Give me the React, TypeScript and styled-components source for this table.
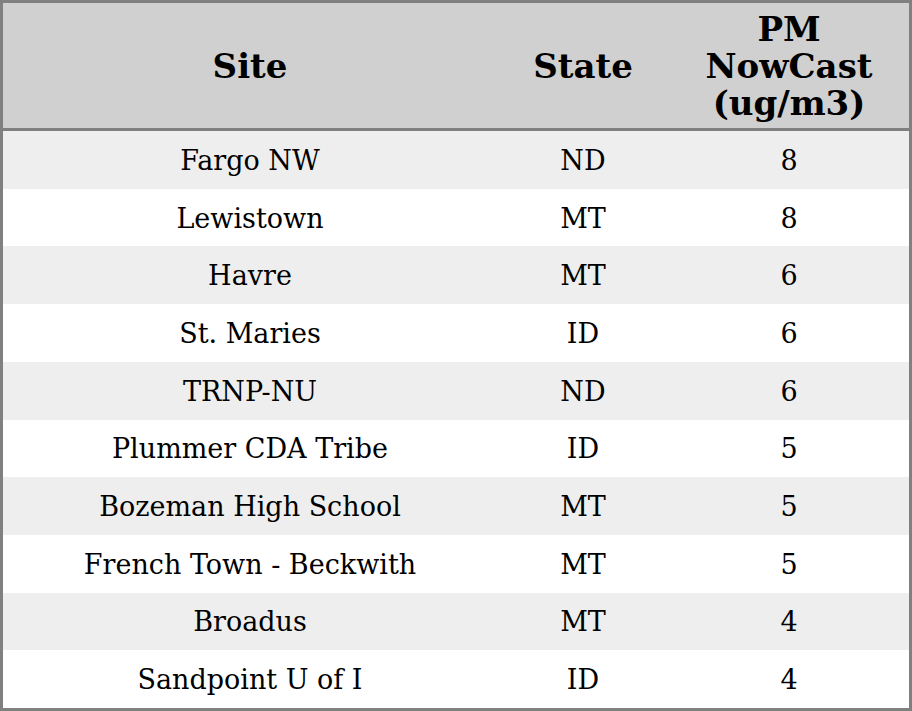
import React from "react";
import styled, { createGlobalStyle } from "styled-components";

const Global = createGlobalStyle`
  html, body { margin: 0; padding: 0; background: #ffffff; }
  * { box-sizing: border-box; }
`;

const Table = styled.div`
  width: 912px;
  height: 711px;
  border: 3px solid #808080;
  display: flex;
  flex-direction: column;
  font-family: "DejaVu Serif", serif;
  color: #000000;
`;

const Cols = `
  display: grid;
  grid-template-columns: 494px 172px 1fr;
  align-items: center;
  text-align: center;
`;

const HeaderRow = styled.div`
  ${Cols}
  height: 128px;
  flex: 0 0 128px;
  background: #d0d0d0;
  border-bottom: 3px solid #808080;
`;

const HeadCell = styled.div`
  font-weight: bold;
  font-size: 34px;
  line-height: 37px;
  padding-top: 2px;
`;

const Row = styled.div<{ $alt: boolean }>`
  ${Cols}
  flex: 1 1 0;
  background: ${(p) => (p.$alt ? "#eeeeee" : "#ffffff")};
`;

const Cell = styled.div`
  font-size: 27px;
  line-height: 30px;
  padding-top: 2px;
`;

const rows: [string, string, string][] = [
  ["Fargo NW", "ND", "8"],
  ["Lewistown", "MT", "8"],
  ["Havre", "MT", "6"],
  ["St. Maries", "ID", "6"],
  ["TRNP-NU", "ND", "6"],
  ["Plummer CDA Tribe", "ID", "5"],
  ["Bozeman High School", "MT", "5"],
  ["French Town - Beckwith", "MT", "5"],
  ["Broadus", "MT", "4"],
  ["Sandpoint U of I", "ID", "4"],
];

export default function App() {
  return (
    <>
      <Global />
      <Table>
        <HeaderRow>
          <HeadCell>Site</HeadCell>
          <HeadCell>State</HeadCell>
          <HeadCell>
            PM
            <br />
            NowCast
            <br />
            (ug/m3)
          </HeadCell>
        </HeaderRow>
        {rows.map((r, i) => (
          <Row key={i} $alt={i % 2 === 0}>
            <Cell>{r[0]}</Cell>
            <Cell>{r[1]}</Cell>
            <Cell>{r[2]}</Cell>
          </Row>
        ))}
      </Table>
    </>
  );
}
